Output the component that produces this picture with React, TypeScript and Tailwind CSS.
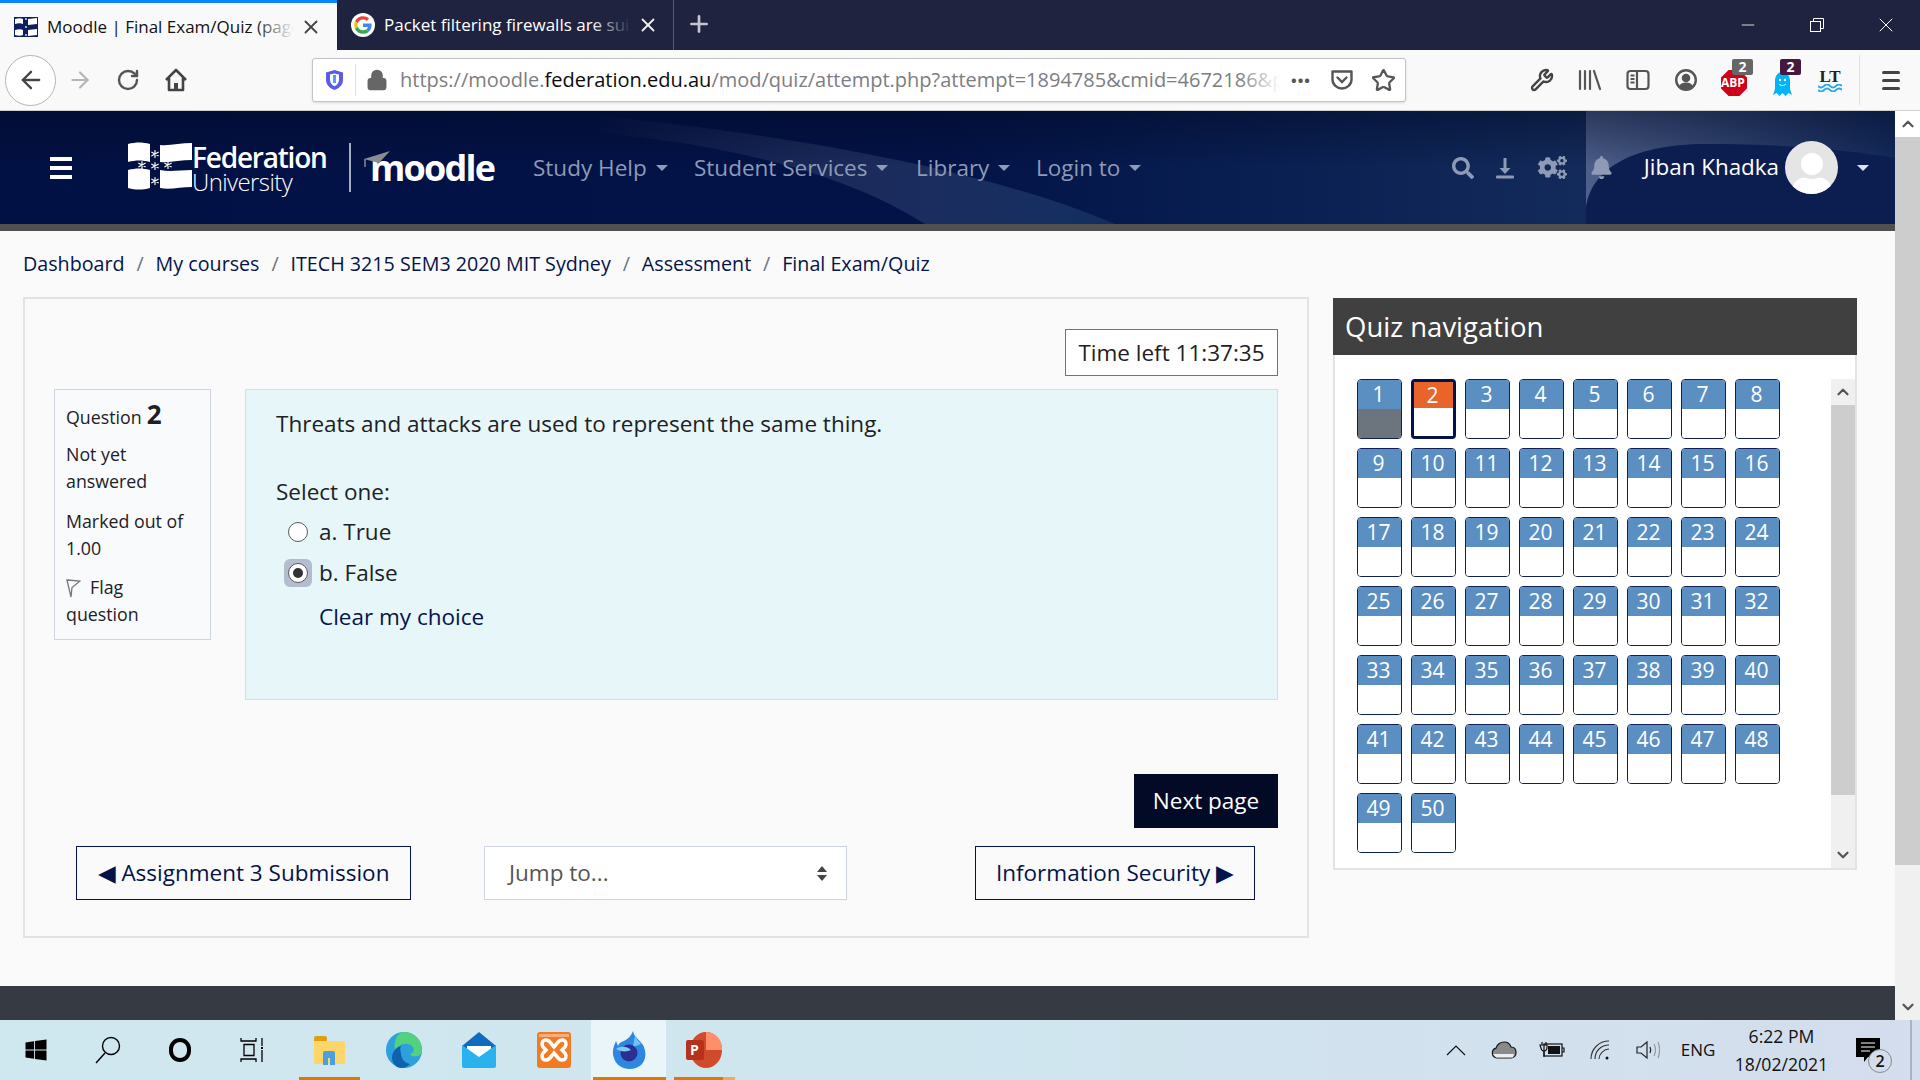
import React from 'react';
import { ArrowLeft, ArrowRight, RotateCw, Star, Wrench, X, Plus, Minus, ChevronUp, ChevronDown, Lock } from 'lucide-react';
import { FaSearch, FaCogs, FaBell, FaWindows, FaUser } from 'react-icons/fa';

const font = "font-['Open_Sans','Noto_Sans',sans-serif]";

const Caret = ({ className = 'border-t-[#8f9ab6]' }: { className?: string }) => (
  <span className={`inline-block w-0 h-0 border-x-[6px] border-x-transparent border-t-[6px] ${className}`} />
);

const Tab = ({ active, title, icon }: { active?: boolean; title: string; icon: React.ReactNode }) => (
  <div
    className={`relative h-[50px] w-[337px] flex items-center pl-[14px] ${
      active ? 'bg-[#f9f9fa] border-t-[3px] border-[#0a84ff] text-[#111]' : 'bg-[#20233f] text-white border-r border-[#565a78]'
    }`}
  >
    <span className="w-[24px] h-[24px] shrink-0 flex items-center justify-center">{icon}</span>
    <div className="relative ml-[9px] w-[247px] overflow-hidden whitespace-nowrap text-[17px]">
      {title}
      <span
        className={`absolute right-0 top-0 bottom-0 w-[40px] bg-gradient-to-r from-transparent ${
          active ? 'to-[#f9f9fa]' : 'to-[#20233f]'
        }`}
      />
    </div>
    <X className="ml-[6px] shrink-0" size={22} strokeWidth={2} color={active ? '#444' : '#eee'} />
  </div>
);

const FlagFavicon = () => (
  <svg width="24" height="24" viewBox="0 0 24 24">
    <rect x="0" y="2" width="24" height="20" fill="#0d1f5c" />
    <path d="M1 4c3-1 6-1 8 0v5c-2-1-5-1-8 0zM14 4c3 0 6-1 9-1v6c-3 0-6 1-9 1zM1 15c3-1 6-1 8 0v5c-2 1-5 1-8 0zM14 15c3 0 6-1 9-1v6c-3 0-6 1-9 1z" fill="#fff" />
    <path d="M11 3h2v2h-2zM11 11h2v2h-2zM11 19h2v2h-2z" fill="#9db2d8" />
  </svg>
);

const GoogleG = () => (
  <svg width="24" height="24" viewBox="0 0 48 48">
    <circle cx="24" cy="24" r="24" fill="#fff" />
    <path fill="#EA4335" d="M24 13c3 0 5.400 1 7.300 2.800l4.800-4.800C33 8.200 28.900 6.400 24 6.400c-7 0-13 4-15.900 9.800l5.600 4.400C15 16.200 19.200 13 24 13z" />
    <path fill="#4285F4" d="M41.200 24.500c0-1.300-.1-2.500-.3-3.600H24v6.900h9.700c-.4 2.200-1.700 4.100-3.600 5.300l5.500 4.300c3.300-3 5.600-7.500 5.600-12.900z" />
    <path fill="#FBBC05" d="M13.700 27.400c-.9-2.600-.9-4.300 0-6.800l-5.600-4.400c-2.300 4.700-2.300 10.900 0 15.600l5.600-4.400z" />
    <path fill="#34A853" d="M24 41.600c4.800 0 8.800-1.600 11.600-4.300l-5.500-4.300c-1.500 1-3.500 1.700-6.100 1.700-4.800 0-9-3.200-10.300-7.300l-5.600 4.400c2.900 5.800 8.900 9.800 15.900 9.800z" />
  </svg>
);

const ToolIcon = ({ children, x }: { children: React.ReactNode; x: string }) => (
  <span className={`${x} h-[44px] flex items-center justify-center shrink-0 relative`}>{children}</span>
);

const Badge = ({ n, bg }: { n: string; bg: string }) => (
  <span className={`absolute left-[22px] top-[1px] w-[21px] h-[16px] rounded-[2px] ${bg} text-white text-[14px] leading-[16px] font-bold text-center`}>{n}</span>
);

const BrowserChrome = () => (
  <div className="shrink-0">
    <div className="h-[50px] bg-[#20233f] flex items-start">
      <Tab active title="Moodle | Final Exam/Quiz (page 2 of 5)" icon={<FlagFavicon />} />
      <Tab title="Packet filtering firewalls are suitable for" icon={<GoogleG />} />
      <Plus className="ml-[12px] mt-[11px]" size={26} strokeWidth={2.5} color="#c4c5cf" />
      <div className="ml-auto flex items-center h-[50px] text-white">
        <span className="w-[69px] flex justify-center"><Minus size={20} strokeWidth={1} /></span>
        <span className="w-[69px] flex justify-center">
          <svg width="16" height="16" viewBox="0 0 16 16" fill="none" stroke="#fff">
            <rect x="1.500" y="4.500" width="10" height="10" />
            <path d="M4.500 4V1.500h10v10H12" />
          </svg>
        </span>
        <span className="w-[69px] flex justify-center"><X size={24} strokeWidth={1} /></span>
      </div>
    </div>
    <div className="h-[61px] bg-[#f9f9fa] border-b border-[#cfcfd2] flex items-center relative">
      <span className="ml-[5px] w-[51px] h-[51px] rounded-full border border-[#b5b5b8] bg-white flex items-center justify-center">
        <ArrowLeft size={28} strokeWidth={2} color="#444" />
      </span>
      <ArrowRight className="ml-[11px]" size={26} strokeWidth={2} color="#b5b5b8" />
      <RotateCw className="ml-[23px]" size={24} strokeWidth={2.4} color="#555" />
      <svg className="ml-[24px]" width="24" height="26" viewBox="0 0 24 26" fill="none" stroke="#444" strokeWidth="2.600" strokeLinejoin="round">
        <path d="M2 13 12 3l10 10M5 11v12h14V11" />
        <rect x="10" y="16" width="4" height="7" fill="#444" stroke="none" />
      </svg>
      <div className="ml-[124px] w-[1094px] h-[44px] bg-white border border-[#c4c4c6] rounded-[3px] shadow-sm flex items-center">
        <svg className="ml-[12px] shrink-0" width="19" height="22" viewBox="0 0 19 22">
          <path d="M1 3.500 9.500 1 18 3.500V11c0 5-4 8.500-8.500 10C5 19.500 1 16 1 11z" fill="#5a5ce8" />
          <path d="M5 5.500 9.500 4.500 14 5.500V11c0 3-2 5-4.500 6.200C7 16 5 14 5 11z" fill="#fff" />
          <path d="M8 6h3v8H8z" fill="#5a9cf0" />
        </svg>
        <span className="ml-[11px] w-px h-[32px] bg-[#e0e0e2] shrink-0" />
        <Lock className="ml-[10px] shrink-0" size={22} strokeWidth={2.6} color="#666" fill="#666" />
        <div className="relative ml-[12px] w-[880px] overflow-hidden whitespace-nowrap text-[20px] text-[#7d7d82]">
          https://moodle.<span className="text-[#0c0c0d]">federation.edu.au</span>/mod/quiz/attempt.php?attempt=1894785&amp;cmid=4672186&amp;page=1#question
          <span className="absolute right-0 top-0 bottom-0 w-[40px] bg-gradient-to-r from-transparent to-white" />
        </div>
        <span className="ml-[8px] text-[#555] text-[15px] tracking-[1px] font-bold w-[26px] text-center">•••</span>
        <svg className="ml-[16px] shrink-0" width="24" height="24" viewBox="0 0 24 24" fill="none" stroke="#555" strokeWidth="2.400">
          <path d="M2.500 3.500h19v8c0 5-4.500 9-9.500 9s-9.500-4-9.500-9z" strokeLinejoin="round" />
          <path d="m7.500 9.500 4.500 4.500 4.500-4.500" strokeLinecap="round" />
        </svg>
        <Star className="ml-[17px] shrink-0" size={25} strokeWidth={2.2} color="#555" />
      </div>
      <div className="ml-[112px] flex items-center">
        <ToolIcon x="w-[48px]"><Wrench size={24} strokeWidth={2.4} color="#444" /></ToolIcon>
        <ToolIcon x="w-[48px]">
          <svg width="24" height="24" viewBox="0 0 24 24" stroke="#555" strokeWidth="2.200" strokeLinecap="round">
            <path d="M2 3v18M7 3v18M12 3v18M16 3l6 18" />
          </svg>
        </ToolIcon>
        <ToolIcon x="w-[48px]">
          <svg width="24" height="24" viewBox="0 0 24 24" fill="none" stroke="#555" strokeWidth="2.200">
            <rect x="1.500" y="3" width="21" height="18" rx="3" />
            <path d="M11 3v18M4.500 7.500h4M4.500 11h4M4.500 14.500h4" />
          </svg>
        </ToolIcon>
        <ToolIcon x="w-[48px]">
          <svg width="22" height="22" viewBox="0 0 22 22">
            <circle cx="11" cy="11" r="9.800" fill="none" stroke="#555" strokeWidth="2.400" />
            <circle cx="11" cy="9" r="4.300" fill="#555" />
            <path d="M4 17c1.500-2.500 4-3.500 7-3.500s5.500 1 7 3.500c-2 2.500-4.500 3.500-7 3.500s-5-1-7-3.500z" fill="#555" />
          </svg>
        </ToolIcon>
        <ToolIcon x="w-[48px]">
          <svg width="26" height="26" viewBox="0 0 24 24" className="mt-[6px]">
            <path d="M7 0h10l7 7v10l-7 7H7l-7-7V7z" fill="#d0021b" />
          </svg>
          <span className="absolute left-[11px] top-[18px] text-white text-[12px] font-bold leading-[14px]">ABP</span>
          <Badge n="2" bg="bg-[#666]" />
        </ToolIcon>
        <ToolIcon x="w-[48px]">
          <svg width="19" height="24" viewBox="0 0 19 24" className="mt-[7px]">
            <path d="M9.500 0c5 0 7.500 4 7.500 9v8l2 6-3.500-2-3 3-3-3-3 3-3-3L0 23l2-6V9c0-5 2.500-9 7.500-9z" fill="#00b4f5" />
            <circle cx="7" cy="8" r="1.200" fill="#fff" />
            <circle cx="12" cy="8" r="1.200" fill="#fff" />
            <path d="M6 12c2 2 5 2 7 0" stroke="#fff" fill="none" />
          </svg>
          <Badge n="2" bg="bg-[#45193f]" />
        </ToolIcon>
        <ToolIcon x="w-[48px]">
          <div className="flex flex-col items-center">
            <span className="text-[17px] leading-[15px] font-bold text-[#222] font-['Liberation_Serif',serif]">LT</span>
            <svg width="24" height="8" viewBox="0 0 24 8" fill="none" stroke="#2fa8de" strokeWidth="1.800">
              <path d="M0 2c2 2 4 2 6 0s4-2 6 0 4 2 6 0 4-2 6 0M0 6c2 2 4 2 6 0s4-2 6 0 4 2 6 0 4-2 6 0" />
            </svg>
          </div>
        </ToolIcon>
        <span className="ml-[5px] w-px h-[50px] bg-[#e0e0e2]" />
        <span className="ml-[22px] w-[18px] flex flex-col gap-[5px]">
          <i className="h-[3px] bg-[#444] rounded" />
          <i className="h-[3px] bg-[#444] rounded" />
          <i className="h-[3px] bg-[#444] rounded" />
        </span>
      </div>
    </div>
  </div>
);

const Flags = () => (
  <svg width="64" height="54" viewBox="0 0 64 54">
    <path d="M0 3c8-2 14-2 22 0v18c-8-2-14-2-22 0zM32 4c10 1 20-2 32-2v17c-12 0-22 3-32 2zM0 29c8-2 14-2 22 0v18c-8 2-14 2-22 0zM32 29c10 2 20 0 32 0v17c-12 0-22 3-32 1z" fill="#fff" />
    <g stroke="#fff" strokeWidth="1.200" strokeLinecap="round">
      <path d="M27 9.500v7M23.800 11.200l6.400 3.600M30.200 11.200l-6.400 3.600" />
      <path d="M14 20.500v7M10.800 22.200l6.400 3.600M17.200 22.200l-6.400 3.600" />
      <path d="M27 21.500v7M23.800 23.200l6.400 3.600M30.200 23.200l-6.400 3.600" />
      <path d="M40 20.500v7M36.800 22.200l6.400 3.600M43.200 22.200l-6.400 3.600" />
      <path d="M27 36.500v7M23.800 38.200l6.400 3.600M30.200 38.200l-6.400 3.600" />
    </g>
  </svg>
);

const NavItem = ({ label, w }: { label: string; w: string }) => (
  <div className={`${w} flex items-center gap-[9px] text-[22.500px] text-[#8f9ab6] whitespace-nowrap`}>
    {label}
    <Caret />
  </div>
);

const SiteHeader = () => (
  <div className="shrink-0">
    <div className="relative h-[113px] bg-gradient-to-r from-[#021144] via-[#031348] via-50% to-[#1d3664] overflow-hidden flex items-center">
      <svg className="absolute inset-0" width="1895" height="113" viewBox="0 0 1895 113">
        <defs>
          <linearGradient id="wedge" x1="0" y1="0" x2="1" y2="0">
            <stop offset="0" stopColor="#ffffff" stopOpacity="0.01" />
            <stop offset="1" stopColor="#2f5b8f" stopOpacity="0.3" />
          </linearGradient>
          <linearGradient id="panel" x1="0" y1="0" x2="1" y2="0">
            <stop offset="0" stopColor="#4d5f8a" />
            <stop offset="1" stopColor="#132a5c" />
          </linearGradient>
          <linearGradient id="topShade" x1="0" y1="0" x2="0" y2="1">
            <stop offset="0" stopColor="#000820" stopOpacity="0.45" />
            <stop offset="0.5" stopColor="#000820" stopOpacity="0" />
          </linearGradient>
        </defs>
        <path d="M600 5C800 25 990 60 1115 113H925C850 65 740 35 600 22z" fill="url(#wedge)" />
        <rect x="1586" y="0" width="309" height="113" fill="url(#panel)" />
        <rect width="1895" height="113" fill="url(#topShade)" />
        <path d="M1586 113c-6-50 40-80 120-80 80 0 140 6 189 14v66z" fill="#0c1d50" />
      </svg>
      <div className="relative flex items-center w-full h-full">
        <span className="ml-[50px] w-[22px] flex flex-col gap-[5px]">
          <i className="h-[4px] bg-white" />
          <i className="h-[4px] bg-white" />
          <i className="h-[4px] bg-white" />
        </span>
        <span className="ml-[56px] flex"><Flags /></span>
        <div className="w-[136px] text-white flex flex-col">
          <span className="text-[28px] leading-[28px] tracking-[-1.200px] font-semibold">Federation</span>
          <span className="text-[24px] leading-[22px] font-light tracking-[-0.6px]">University</span>
        </div>
        <span className="ml-[21px] w-[2px] h-[49px] bg-[#a4acc0]" />
        <div className="relative ml-[19px] w-[126px] text-white text-[36px] font-bold tracking-[-1.800px] leading-[40px]">
          moodle
          <svg className="absolute -left-[6px] top-[2px]" width="26" height="20" viewBox="0 0 26 20">
            <path d="M0 9 26 1 15 13z" fill="#8b8d91" />
            <path d="M1 9v8" stroke="#8b8d91" strokeWidth="1.500" />
          </svg>
        </div>
        <div className="ml-[37px] flex items-center">
          <NavItem label="Study Help" w="w-[161px]" />
          <NavItem label="Student Services" w="w-[222px]" />
          <NavItem label="Library" w="w-[120px]" />
          <NavItem label="Login to" w="w-[120px]" />
        </div>
        <div className="ml-auto flex items-center text-[#8f9ab6]">
          <span className="w-[42px] flex justify-center"><FaSearch size={22} /></span>
          <span className="w-[42px] flex justify-center">
            <svg width="18" height="22" viewBox="0 0 18 22" fill="#8f9ab6">
              <path d="M7.500 1h3v10h4L9 17 3.500 11h4z" />
              <rect x="0" y="18.500" width="18" height="3" rx="1" />
            </svg>
          </span>
          <span className="w-[54px] flex justify-center"><FaCogs size={29} /></span>
          <span className="w-[44px] flex justify-center"><FaBell size={23} /></span>
          <span className="ml-[20px] text-white text-[22.400px] whitespace-nowrap -translate-y-[1px]">Jiban Khadka</span>
          <span className="ml-[6px] w-[53px] h-[53px] rounded-full bg-[#e5e5e5] overflow-hidden flex items-end justify-center">
            <FaUser size={44} color="#fff" className="translate-y-[3px]" />
          </span>
          <span className="ml-[19px] mr-[26px] flex"><Caret className="border-t-[#dfe3ef]" /></span>
        </div>
      </div>
    </div>
    <div className="h-[7px] bg-[#505050]" />
  </div>
);

const crumbs = ['Dashboard', 'My courses', 'ITECH 3215 SEM3 2020 MIT Sydney', 'Assessment', 'Final Exam/Quiz'];

const Breadcrumb = () => (
  <div className="h-[66px] flex items-center text-[19.700px] text-[#04144a] whitespace-nowrap">
    {crumbs.map((c, i) => (
      <React.Fragment key={c}>
        {i > 0 && <span className="w-[31px] text-center text-[#6c757d]">/</span>}
        <span>{c}</span>
      </React.Fragment>
    ))}
  </div>
);

const QuestionInfo = () => (
  <div className="w-[157px] h-[251px] shrink-0 border border-[#cfd5e0] bg-[#f8fafc] pl-[11px] pt-[11px] text-[17.800px] leading-[27px] text-[#1d2125]">
    <div className="flex items-baseline gap-[5px] h-[32px]">
      Question <span className="text-[26px] font-bold">2</span>
    </div>
    <div className="mt-[8px]">Not yet<br />answered</div>
    <div className="mt-[13px]">Marked out of<br />1.00</div>
    <div className="mt-[12px] flex items-center gap-[9px] h-[27px]">
      <svg width="15" height="20" viewBox="0 0 15 20" fill="none" stroke="#777" strokeWidth="1.300">
        <path d="M1 2 14 3 6 9.500 5 19zM1 2 5 19" />
      </svg>
      Flag
    </div>
    <div>question</div>
  </div>
);

const QuestionBox = () => (
  <div className="flex-1 h-[311px] border border-[#c5e6ec] bg-[#e7f6f8] pl-[30px] pt-[17px] text-[22.500px] text-[#1d2125]">
    <div className="leading-[34px]">Threats and attacks are used to represent the same thing.</div>
    <div className="mt-[34px] leading-[34px]">Select one:</div>
    <div className="ml-[12px] mt-[6px] h-[34px] flex items-center gap-[11px]">
      <span className="w-[20px] h-[20px] rounded-full border border-[#5a5a5a] bg-white" />
      a. True
    </div>
    <div className="ml-[12px] mt-[7px] h-[34px] flex items-center gap-[11px]">
      <span className="-m-[4px] w-[28px] h-[28px] rounded-[6px] bg-[#b3bdcd] flex items-center justify-center">
        <span className="w-[20px] h-[20px] rounded-full border border-[#5a5a5a] bg-white flex items-center justify-center">
          <i className="w-[10px] h-[10px] rounded-full bg-[#333]" />
        </span>
      </span>
      b. False
    </div>
    <div className="ml-[43px] mt-[10px] leading-[34px] text-[#04144a]">Clear my choice</div>
  </div>
);

const OutlineBtn = ({ children, w }: { children: React.ReactNode; w: string }) => (
  <div className={`${w} h-[54px] border border-[#04144a] flex items-center justify-center text-[22.500px] text-[#04144a] whitespace-nowrap`}>
    {children}
  </div>
);

const QuizCard = () => (
  <div className="w-[1286px] h-[641px] shrink-0 border-2 border-[#e2e3e5] pt-[30px] px-[29px]">
    <div className="flex justify-end">
      <div className="w-[213px] h-[47px] border border-[#e0405a] bg-white flex items-center justify-center text-[22.500px] text-[#1d2125] whitespace-nowrap">
        Time left 11:37:35
      </div>
    </div>
    <div className="mt-[13px] flex gap-[34px]">
      <QuestionInfo />
      <QuestionBox />
    </div>
    <div className="mt-[74px] flex justify-end">
      <div className="w-[144px] h-[54px] bg-[#030a26] text-white flex items-center justify-center text-[22.500px]">Next page</div>
    </div>
    <div className="mt-[18px] ml-[22px] flex">
      <OutlineBtn w="w-[335px]">◀&nbsp;Assignment 3 Submission</OutlineBtn>
      <div className="ml-[73px] w-[363px] h-[54px] border border-[#cfd5e0] bg-white flex items-center justify-between pl-[24px] pr-[19px] text-[22.500px] text-[#555]">
        Jump to...
        <span className="flex flex-col gap-[3px]">
          <i className="w-0 h-0 border-x-[5px] border-x-transparent border-b-[6px] border-b-[#444]" />
          <i className="w-0 h-0 border-x-[5px] border-x-transparent border-t-[6px] border-t-[#444]" />
        </span>
      </div>
      <div className="ml-[128px]">
        <OutlineBtn w="w-[280px]">Information Security&nbsp;▶</OutlineBtn>
      </div>
    </div>
  </div>
);

const QuizBtn = ({ n }: { n: number }) => {
  const current = n === 2;
  return (
    <div className={`w-[45px] h-[60px] rounded-[4px] overflow-hidden flex flex-col ${current ? 'border-[3px] border-[#03124a]' : 'border border-[#0f2058]'}`}>
      <div className={`${current ? 'h-[26px] bg-[#e9642a] leading-[27px]' : 'h-[29px] bg-[#5b8fc2] leading-[29px]'} pr-[2px] text-white text-[21px] text-center shrink-0`}>{n}</div>
      <div className={`flex-1 ${n === 1 ? 'bg-[#6c757d]' : 'bg-white'}`} />
    </div>
  );
};

const QuizNav = () => (
  <div className="ml-[24px] mt-[1px] w-[524px] h-[572px] shrink-0 border-2 border-[#e2e3e5] border-t-0 bg-white flex flex-col">
    <div className="-mx-[2px] h-[57px] shrink-0 bg-[#404040] text-white text-[27.500px] leading-[57px] pl-[12px]">Quiz navigation</div>
    <div className="flex-1 flex">
      <div className="flex-1 pl-[22px] pt-[24px]">
        <div className="grid grid-cols-[repeat(8,45px)] gap-x-[9px] gap-y-[9px]">
          {Array.from({ length: 50 }, (_, i) => <QuizBtn key={i} n={i + 1} />)}
        </div>
      </div>
      <div className="mt-[24px] w-[24px] bg-[#f0f0f0] flex flex-col">
        <div className="h-[26px] flex items-center justify-center"><ChevronUp size={18} strokeWidth={3} color="#555" /></div>
        <div className="h-[390px] bg-[#cdcdcd]" />
        <div className="mt-auto h-[26px] flex items-center justify-center"><ChevronDown size={18} strokeWidth={3} color="#555" /></div>
      </div>
    </div>
  </div>
);

const PageScrollbar = () => (
  <div className="w-[25px] shrink-0 bg-[#f0f0f0] flex flex-col">
    <div className="h-[26px] flex items-center justify-center bg-white"><ChevronUp size={18} strokeWidth={3} color="#555" /></div>
    <div className="h-[728px] bg-[#cdcdcd]" />
    <div className="mt-auto h-[26px] flex items-center justify-center"><ChevronDown size={18} strokeWidth={3} color="#555" /></div>
  </div>
);

const TaskItem = ({ children, bar, active, w = 'w-[75px]' }: { children: React.ReactNode; bar?: string; active?: boolean; w?: string }) => (
  <div className={`relative ${w} h-[60px] flex items-center justify-center ${active ? 'bg-[#eaf5f9]' : ''}`}>
    {children}
    {bar && <span className={`absolute bottom-0 h-[3px] ${bar}`} />}
  </div>
);

const Taskbar = () => (
  <div className="h-[60px] shrink-0 bg-gradient-to-r from-[#cfe7ef] via-[#cfe6ef] to-[#d4dded] flex items-center">
    <TaskItem w="w-[72px]"><FaWindows size={24} color="#000" /></TaskItem>
    <TaskItem w="w-[72px]">
      <svg width="26" height="28" viewBox="0 0 26 28" fill="none" stroke="#000" strokeWidth="1.400">
        <circle cx="16" cy="10" r="8.500" />
        <path d="M10 17 1 27" />
      </svg>
    </TaskItem>
    <TaskItem w="w-[72px]">
      <span className="w-[22px] h-[24px] rounded-full border-[4px] border-black" />
    </TaskItem>
    <TaskItem w="w-[72px]">
      <svg width="24" height="24" viewBox="0 0 24 24" fill="none" stroke="#000" strokeWidth="1.300">
        <path d="M1 0v3h15V0M4 6.500h10v11H4zM1 24v-3h15v3M22 0v8M22 12v12" />
        <rect x="21" y="9" width="2" height="2" fill="#000" stroke="none" />
      </svg>
    </TaskItem>
    <div className="w-[3px]" />
    <TaskItem bar="left-[8px] w-[61px] bg-[#d97a06]">
      <svg width="32" height="32" viewBox="0 0 32 32">
        <path d="M1 4a2 2 0 0 1 2-2h9a2 2 0 0 1 2 2v4H1z" fill="#dd9e12" />
        <path d="M1 7h29a2 2 0 0 1 2 2v19a2 2 0 0 1-2 2H3a2 2 0 0 1-2-2z" fill="#fcd669" />
        <path d="M10 31V19a2 2 0 0 1 2-2h8a2 2 0 0 1 2 2v12h-5v-7h-2v7z" fill="#4a9fdc" />
      </svg>
    </TaskItem>
    <TaskItem>
      <svg width="36" height="36" viewBox="0 0 36 36">
        <circle cx="18" cy="18" r="18" fill="#2da0dd" />
        <path d="M18 0c10 0 18 8 18 18 0 3-1 5-4 6-4 1-7 0-8-2 4-1 5-5 2-8-6-5-15-1-17 6C7 7 12 0 18 0z" fill="#52d27c" />
        <path d="M15 21c0 6 4 10 9 11-2 2-5 4-8 4-8 0-12-8-9-15 1-3 4-6 8-7-1 2-1 5 0 7z" fill="#0f62ad" />
      </svg>
    </TaskItem>
    <TaskItem>
      <svg width="34" height="36" viewBox="0 0 34 36">
        <path d="M0 14 17 0l17 14v4H0z" fill="#0f6cbd" />
        <path d="M5 14h24v6L17 28 5 20z" fill="#fff" />
        <path d="M0 13 17 25l17-12v21a2 2 0 0 1-2 2H2a2 2 0 0 1-2-2z" fill="#29b2ee" />
      </svg>
    </TaskItem>
    <TaskItem>
      <svg width="34" height="36" viewBox="0 0 34 36">
        <rect width="34" height="36" rx="3" fill="#f17a22" />
        <rect x="2" y="2" width="30" height="3" fill="#f9ad7a" />
        <path d="M9 8c-4 0-5 4-3 7l3 3-3 3c-2 3-1 7 3 7 3 0 4-2 8-7 4 5 5 7 8 7 4 0 5-4 3-7l-3-3 3-3c2-3 1-7-3-7-3 0-4 2-8 7-4-5-5-7-8-7z" fill="none" stroke="#fff" strokeWidth="3.500" />
      </svg>
    </TaskItem>
    <TaskItem active bar="left-[2px] w-[73px] bg-[#d97a06]">
      <svg width="34" height="38" viewBox="0 0 34 38">
        <path d="M21 0c1 6 6 8 10 14 5 9 3 24-14 24C5 38-2 26 2 15l2-5 2 5c1-3 3-4 6-5 4-2 7-5 9-10z" fill="#2f86e0" />
        <path d="M23 4c1 4 4 6 6 9l-8 3z" fill="#6fc3f7" />
        <circle cx="17" cy="22" r="8.500" fill="#2b2f8f" />
        <path d="M4 18c4-3 11-3 15 1-4 2-10 2-15-1z" fill="#7ccbf5" />
      </svg>
    </TaskItem>
    <TaskItem bar="left-[8px] w-[61px] bg-gradient-to-r from-[#d97a06] from-80% to-[#e9ac62] to-80%">
      <div className="relative w-[36px] h-[36px]">
        <span className="absolute right-0 top-0 w-[32px] h-[36px] rounded-[50%] bg-[#d04b2c]" />
        <span className="absolute right-0 top-0 w-[16px] h-[18px] rounded-tr-[16px] bg-[#ff8f6b]" />
        <span className="absolute left-0 top-[8px] w-[18px] h-[20px] rounded-[2px] bg-[#b7321a] text-white text-[14px] leading-[20px] font-bold text-center">P</span>
      </div>
    </TaskItem>
    <div className="ml-auto flex items-center h-[60px] text-[#111]">
      <span className="w-[48px] flex justify-center">
        <svg width="20" height="12" viewBox="0 0 20 12" fill="none" stroke="#111" strokeWidth="1.200"><path d="m1 11 9-9 9 9" /></svg>
      </span>
      <span className="w-[48px] flex justify-center">
        <svg width="26" height="18" viewBox="0 0 26 18">
          <path d="M6 17a5 5 0 0 1-1-9.800C6 3 10 1 13 1c3 0 6 2 7 5 3 0 5 2 5 5.500 0 3-2 5.500-5 5.500z" fill="#8a8a8a" stroke="#111" strokeWidth="1.200" />
          <path d="M2 13h21l-1 3.500H5z" fill="#eee" />
        </svg>
      </span>
      <span className="w-[48px] flex justify-center">
        <svg width="26" height="18" viewBox="0 0 26 18" fill="none" stroke="#111" strokeWidth="1.200">
          <rect x="5" y="3" width="18" height="12" />
          <rect x="9" y="5" width="12" height="8" fill="#111" stroke="none" />
          <path d="M23 7h2v4h-2M3 1v3M7 1v3M1 4h7v3c0 2-2 3-3 3s-3-1-3-3zM5 10v6" />
        </svg>
      </span>
      <span className="w-[48px] flex justify-center">
        <svg width="20" height="20" viewBox="0 0 20 20" fill="none" stroke="#333" strokeWidth="1.100">
          <path d="M1 19C1 9 9 1 19 1M5 19c0-8 6-14 14-14M9 19c0-5 5-10 10-10" />
          <circle cx="17" cy="18" r="1.500" fill="#111" stroke="none" />
        </svg>
      </span>
      <span className="w-[48px] flex justify-center">
        <svg width="24" height="20" viewBox="0 0 24 20" fill="none" stroke="#222" strokeWidth="1.200">
          <path d="M1 7h4l6-5v16l-6-5H1zM14 7c1 2 1 4 0 6" />
          <path d="M18 4c2 4 2 8 0 12M22 2c2 5 2 11 0 16" stroke="#999" />
        </svg>
      </span>
      <span className="w-[52px] text-center text-[17px]">ENG</span>
      <div className="w-[114px] pl-[1px] text-center text-[17.600px] leading-[28px] whitespace-nowrap">
        <div>6:22 PM</div>
        <div>18/02/2021</div>
      </div>
      <span className="relative w-[60px] flex justify-center">
        <svg width="24" height="24" viewBox="0 0 24 24">
          <path d="M0 0h24v19H12l-4 5v-5H0z" fill="#000" />
          <path d="M5 5h14M5 9h14M5 13h9" stroke="#fff" strokeWidth="1.200" />
        </svg>
        <span className="absolute left-[30px] top-[11px] w-[24px] h-[24px] rounded-full bg-[#d4dded] border border-[#888] text-[16px] leading-[22px] font-semibold text-center">2</span>
      </span>
      <span className="ml-[12px] w-[2px] h-[60px] bg-[#a9b4c2]" />
      <span className="w-[8px]" />
    </div>
  </div>
);

export default function App() {
  return (
    <div className={`${font} w-[1920px] h-[1080px] overflow-hidden flex flex-col bg-[#fafafa]`}>
      <BrowserChrome />
      <div className="flex-1 min-h-0 flex">
        <div className="w-[1895px] flex flex-col">
          <SiteHeader />
          <div className="flex-1 px-[23px]">
            <Breadcrumb />
            <div className="flex items-start">
              <QuizCard />
              <QuizNav />
            </div>
          </div>
          <div className="h-[34px] bg-[#363a43] shrink-0" />
        </div>
        <PageScrollbar />
      </div>
      <Taskbar />
    </div>
  );
}
